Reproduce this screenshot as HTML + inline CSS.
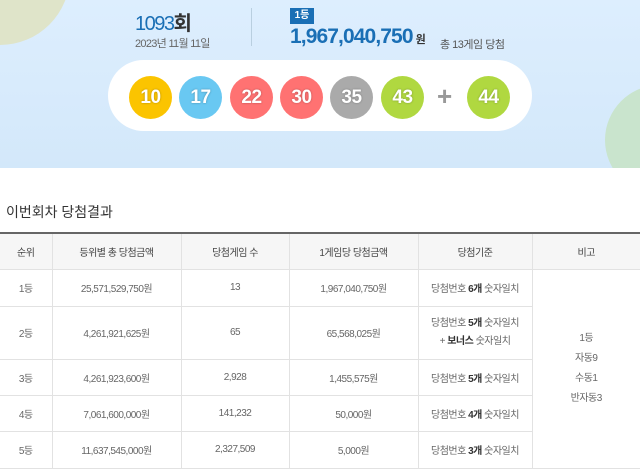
<!DOCTYPE html>
<html><head><meta charset="utf-8"><style>
*{margin:0;padding:0;box-sizing:border-box}
body{width:640px;height:467px;overflow:hidden;background:#fff;font-family:"Liberation Sans","Noto Sans CJK KR",sans-serif;color:#555;position:relative}
.banner{position:absolute;left:0;top:0;width:640px;height:168px;background:linear-gradient(#ddeefe,#d3e8fa);overflow:hidden}
.c1{position:absolute;left:-70px;top:-95px;width:140px;height:140px;border-radius:50%;background:#dfe4c9}
.c2{position:absolute;left:605px;top:85px;width:110px;height:110px;border-radius:50%;background:#c9e4cd}
.t{position:absolute;white-space:nowrap}
.pill{position:absolute;left:108px;top:60px;width:424px;height:71px;border-radius:36px;background:#fff}
.ball{position:absolute;top:76px;width:43px;height:43px;border-radius:50%;color:#fff;font-weight:bold;font-size:19px;text-align:center;line-height:43px;text-shadow:0 0 2px rgba(0,0,0,.3);letter-spacing:-0.5px}
table{position:absolute;left:0;top:232px;width:640px;border-collapse:collapse;font-size:10px;color:#666;letter-spacing:-0.5px}
th,td{border:1px solid #e2e2e2;text-align:center;font-weight:normal}
th{background:#f6f6f6;height:36px;color:#444}
tr:first-child th{border-top:2px solid #666}
th:first-child,td:first-child{border-left:none}
th:last-child,td:last-child{border-right:none}
b{color:#333}
</style></head><body>
<div class="banner"><div class="c1"></div><div class="c2"></div></div>
<div class="t" style="left:135px;top:7px;font-size:20px;color:#1a6fb5;letter-spacing:-1.5px">1093<span style="color:#333;font-weight:bold;letter-spacing:0">회</span></div>
<div class="t" style="left:135px;top:35px;font-size:11px;color:#666;letter-spacing:-0.7px">2023년 11월 11일</div>
<div style="position:absolute;left:251px;top:8px;width:1px;height:38px;background:#b9cfe0"></div>
<div class="t" style="left:290px;top:8px;width:24px;height:16px;background:#1a6fb5;color:#fff;font-size:10px;font-weight:bold;text-align:center;line-height:16px">1등</div>
<div class="t" style="left:290px;top:25px;font-size:21px;font-weight:bold;color:#1a6fb5;letter-spacing:-0.9px">1,967,040,750<span style="font-size:11px;color:#333;letter-spacing:0"> 원</span></div>
<div class="t" style="left:440px;top:36px;font-size:11px;color:#555;letter-spacing:-0.5px">총 13게임 당첨</div>
<div class="pill"></div>
<div class="ball" style="left:129px;background:#fbc400">10</div>
<div class="ball" style="left:179px;background:#69c8f2">17</div>
<div class="ball" style="left:230px;background:#ff7272">22</div>
<div class="ball" style="left:280px;background:#ff7272">30</div>
<div class="ball" style="left:330px;background:#aaa">35</div>
<div class="ball" style="left:381px;background:#b0d840">43</div>
<div class="t" style="left:437px;top:82px;font-size:26px;font-weight:bold;color:#999;line-height:28px">+</div>
<div class="ball" style="left:467px;background:#b0d840">44</div>
<div class="t" style="left:6px;top:202px;font-size:14px;color:#333">이번회차 당첨결과</div>
<table>
<tr><th style="width:52px">순위</th><th style="width:129px">등위별 총 당첨금액</th><th style="width:108px">당첨게임 수</th><th style="width:129px">1게임당 당첨금액</th><th style="width:114px">당첨기준</th><th>비고</th></tr>
<tr style="height:37px"><td>1등</td><td>25,571,529,750원</td><td>13</td><td>1,967,040,750원</td><td>당첨번호 <b>6개</b> 숫자일치</td><td rowspan="5" style="line-height:20px">1등<br>자동9<br>수동1<br>반자동3</td></tr>
<tr style="height:53px"><td>2등</td><td>4,261,921,625원</td><td>65</td><td>65,568,025원</td><td style="line-height:18px">당첨번호 <b>5개</b> 숫자일치<br>+ <b>보너스</b> 숫자일치</td></tr>
<tr style="height:36px"><td>3등</td><td>4,261,923,600원</td><td>2,928</td><td>1,455,575원</td><td>당첨번호 <b>5개</b> 숫자일치</td></tr>
<tr style="height:36px"><td>4등</td><td>7,061,600,000원</td><td>141,232</td><td>50,000원</td><td>당첨번호 <b>4개</b> 숫자일치</td></tr>
<tr style="height:37px"><td>5등</td><td>11,637,545,000원</td><td>2,327,509</td><td>5,000원</td><td>당첨번호 <b>3개</b> 숫자일치</td></tr>
</table>
</body></html>
